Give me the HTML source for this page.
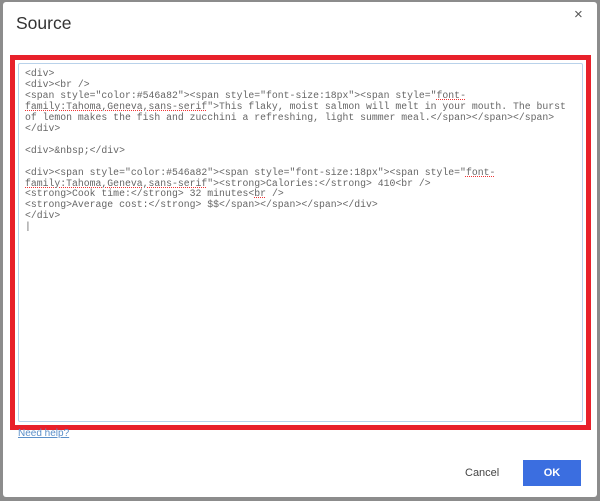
<!DOCTYPE html>
<html><head><style>
html,body{margin:0;padding:0;width:600px;height:501px;overflow:hidden;background:#8c8c8c;font-family:"Liberation Sans",sans-serif}
.dlg{position:absolute;left:3px;top:2px;width:594px;height:495px;background:#fff;border-radius:3px}
.title{position:absolute;left:16px;top:13px;font-size:17.5px;color:#333}
.x{position:absolute;left:574px;top:6px;font-size:15px;color:#555}
.red{position:absolute;left:10px;top:55px;width:571px;height:365px;border:5px solid #e8212b;background:#fff}
.ta{position:absolute;left:18px;top:63px;width:563px;height:357px;border:1px solid #b9d2ea;border-radius:2px;background:#fff}
pre{position:absolute;left:25px;top:69px;margin:0;font-family:"Liberation Mono",monospace;font-size:9.8px;line-height:10.95px;color:#666}
.u{text-decoration:underline dotted #e33}
.help{position:absolute;left:18px;top:428px;font-size:10px;color:#5b8fc9;text-decoration:underline}
.cancel{position:absolute;left:465px;top:467px;font-size:11px;color:#444}
.ok{position:absolute;left:523px;top:460px;width:58px;height:26px;background:#3b6ee0;color:#fff;font-size:11px;font-weight:bold;text-align:center;line-height:26px}
</style></head><body>
<div class="dlg"></div>
<div class="title">Source</div>
<div class="x">×</div>
<div class="red"></div>
<div class="ta"></div>
<pre>&lt;div&gt;
&lt;div&gt;&lt;br /&gt;
&lt;span style="color:#546a82"&gt;&lt;span style="font-size:18px"&gt;&lt;span style="<span class="u">font-</span>
<span class="u">family:Tahoma,Geneva,sans-serif</span>"&gt;This flaky, moist salmon will melt in your mouth. The burst
of lemon makes the fish and zucchini a refreshing, light summer meal.&lt;/span&gt;&lt;/span&gt;&lt;/span&gt;
&lt;/div&gt;

&lt;div&gt;&amp;nbsp;&lt;/div&gt;

&lt;div&gt;&lt;span style="color:#546a82"&gt;&lt;span style="font-size:18px"&gt;&lt;span style="<span class="u">font-</span>
<span class="u">family:Tahoma,Geneva,sans-serif</span>"&gt;&lt;strong&gt;Calories:&lt;/strong&gt; 410&lt;br /&gt;
&lt;strong&gt;Cook time:&lt;/strong&gt; 32 minutes&lt;<span class="u">br</span> /&gt;
&lt;strong&gt;Average cost:&lt;/strong&gt; $$&lt;/span&gt;&lt;/span&gt;&lt;/span&gt;&lt;/div&gt;
&lt;/div&gt;
|</pre>
<div class="help">Need help?</div>
<div class="cancel">Cancel</div>
<div class="ok">OK</div>
</body></html>
